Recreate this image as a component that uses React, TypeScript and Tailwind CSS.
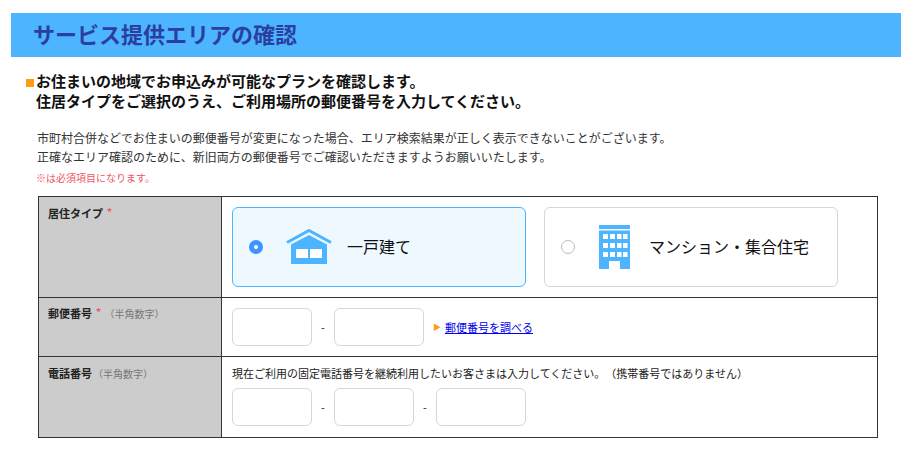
const font = "font-['Meiryo','Noto_Sans_CJK_JP','Noto_Sans',sans-serif]";

function HouseIcon() {
  return (
    <svg width="46" height="36" viewBox="0 0 46 36" className="shrink-0">
      <path d="M1 13.5 23 1.5 45 13.5" fill="none" stroke="#4db5ff" strokeWidth="3" />
      <path d="M5 15.5 23 6l18 9.5V35H5Z" fill="#4db5ff" />
      <path d="M10 20h12v9H10ZM24 20h12v9H24Z" fill="#fff" />
    </svg>
  );
}

function BuildingIcon() {
  return (
    <svg width="31" height="44" viewBox="0 0 31 44" className="shrink-0">
      <path d="M0 0h31v4H0ZM0 5.500h31V44H21v-8H10v8H0Z" fill="#4db5ff" />
      <path
        d="M4 9h5v5H4ZM11 9h5v5h-5ZM18 9h4.500v5H18ZM24 9h4.500v5H24ZM4 18h5v5H4ZM11 18h5v5h-5ZM18 18h4.500v5H18ZM24 18h4.500v5H24ZM4 27h5v5H4ZM11 27h5v5h-5ZM18 27h4.500v5H18ZM24 27h4.500v5H24Z"
        fill="#fff"
      />
    </svg>
  );
}

function Field({ width }: { width: string }) {
  return <input type="text" className={`${width} h-[38px] rounded-md border border-[#d6d6d6] bg-white`} />;
}

function Dash() {
  return <span className="w-[22px] text-center text-[11px] text-[#222]">-</span>;
}

export default function App() {
  return (
    <div className={`${font} [text-spacing-trim:space-all] w-[916px] h-[452px] overflow-hidden bg-white pt-[13px] px-[11px] text-[#222]`}>
      {/* Title */}
      <h1 className="w-[890px] h-[44px] bg-[#4db5ff] pl-[22px] text-[22px] leading-[40px] font-bold text-[#2b3f9f]">
        サービス提供エリアの確認
      </h1>

      {/* Lead */}
      <div className="mt-[14px] ml-[15px] flex text-[15px] leading-[20px] font-bold text-[#111]">
        <span className="mt-[8px] mr-[2px] size-[8px] shrink-0 bg-[#ff9c12]" />
        <p>
          お住まいの地域でお申込みが可能なプランを確認します。
          <br />
          住居タイプをご選択のうえ、ご利用場所の郵便番号を入力してください。
        </p>
      </div>

      <p className="mt-[17px] ml-[26px] text-[12px] leading-[19px] text-[#333]">
        市町村合併などでお住まいの郵便番号が変更になった場合、エリア検索結果が正しく表示できないことがございます。
        <br />
        正確なエリア確認のために、新旧両方の郵便番号でご確認いただきますようお願いいたします。
      </p>
      <p className="mt-[5px] ml-[25px] text-[10px] leading-[14px] text-[#f0565f]">※は必須項目になります。</p>

      {/* Form table */}
      <table className="mt-[11px] ml-[27px] w-[840px] table-fixed border-collapse border border-[#333]">
        <tbody>
          <tr className="h-[101px]">
            <th className="w-[183px] border border-[#333] bg-[#cccccc] pt-[8px] pl-[9px] align-top text-left text-[11px] leading-[16px] font-bold">
              居住タイプ <span className="ml-[1px] text-[13px] font-normal text-[#f0565f]">*</span>
            </th>
            <td className="border border-[#333] pl-[10px] align-middle">
              <div className="flex gap-[18px]">
                <label className="flex h-[80px] w-[294px] items-center rounded-md border border-[#4db5ff] bg-[#edf8ff] pl-[16px]">
                  <span className="size-[14px] rounded-full border-[5px] border-[#3f95fb] bg-white" />
                  <span className="ml-[23px]">
                    <HouseIcon />
                  </span>
                  <span className="ml-[15px] pb-[2px] text-[16px] text-[#111]">一戸建て</span>
                </label>
                <label className="flex h-[80px] w-[294px] items-center rounded-md border border-[#d6d6d6] bg-white pl-[16px]">
                  <span className="size-[14px] rounded-full border border-[#bdbdbd] bg-white" />
                  <span className="ml-[24px]">
                    <BuildingIcon />
                  </span>
                  <span className="ml-[19px] pb-[2px] text-[16px] text-[#111]">マンション・集合住宅</span>
                </label>
              </div>
            </td>
          </tr>
          <tr className="h-[59px]">
            <th className="border border-[#333] bg-[#cccccc] pt-[7px] pl-[9px] align-top text-left text-[11px] leading-[16px] font-bold">
              郵便番号 <span className="ml-[1px] text-[13px] font-normal text-[#f0565f]">*</span>
              <span className="ml-[3px] text-[10px] font-normal text-[#777]">（半角数字）</span>
            </th>
            <td className="border border-[#333] pl-[10px] align-middle">
              <div className="flex items-center">
                <Field width="w-[80px]" />
                <Dash />
                <Field width="w-[90px]" />
                <span className="ml-[9px] text-[8px] text-[#ff9c12]">▶</span>
                <a href="#" className="ml-[4px] text-[11px] text-[#0000ee] underline">
                  郵便番号を調べる
                </a>
              </div>
            </td>
          </tr>
          <tr className="h-[81px]">
            <th className="border border-[#333] bg-[#cccccc] pt-[8px] pl-[9px] align-top text-left text-[11px] leading-[16px] font-bold">
              電話番号
              <span className="ml-[1px] text-[10px] font-normal text-[#777]">（半角数字）</span>
            </th>
            <td className="border border-[#333] pl-[10px] align-top">
              <p className="mt-[8px] text-[11px] leading-[16px]">
                現在ご利用の固定電話番号を継続利用したいお客さまは入力してください。（携帯番号ではありません）
              </p>
              <div className="mt-[7px] flex items-center">
                <Field width="w-[80px]" />
                <Dash />
                <Field width="w-[80px]" />
                <Dash />
                <Field width="w-[90px]" />
              </div>
            </td>
          </tr>
        </tbody>
      </table>
    </div>
  );
}
